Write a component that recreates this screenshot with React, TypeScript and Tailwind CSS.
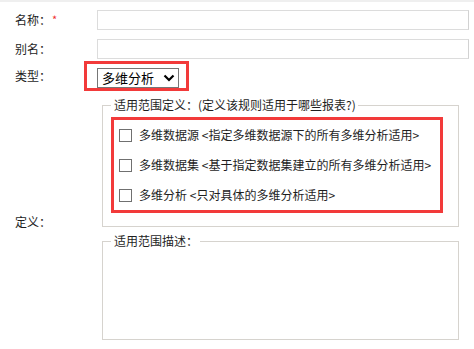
import React from "react";

const Checkbox = () => (
  <span className="block w-[13px] h-[13px] border border-[#707070] bg-white shrink-0" />
);

const Row = ({ name, desc }: { name: string; desc: string }) => (
  <div className="flex items-center h-[30px] pl-[5px]">
    <Checkbox />
    <span className="ml-[7px] whitespace-nowrap">
      {name} &lt;{desc}&gt;
    </span>
  </div>
);

export default function App() {
  return (
    <div className="w-[474px] h-[349px] bg-white text-[12px] leading-[20px] text-[#1e1e1e] font-['Noto_Sans_CJK_SC','Microsoft_YaHei',sans-serif] overflow-hidden">
      <div className="h-[2px] bg-[#efefef]" />
      <div className="flex flex-col pt-[8px]">
        <div className="flex items-center h-[20px]">
          <div className="w-[97px] pl-[15px] flex items-start whitespace-nowrap">
            <span>名称：</span>
            <span className="text-[#f03030] text-[11px] leading-[11px] mt-[4px] ml-[1px]">*</span>
          </div>
          <div className="w-[372px] h-[20px] border border-[#dcdcdc] border-r-[#d2d2d2] bg-white" />
        </div>
        <div className="flex items-center h-[20px] mt-[9px]">
          <div className="w-[97px] pl-[15px] whitespace-nowrap">别名：</div>
          <div className="w-[372px] h-[20px] border border-[#dcdcdc] border-r-[#d2d2d2] bg-white" />
        </div>
        <div className="flex items-center h-[30px] mt-[2px]">
          <div className="w-[84px] pl-[15px] whitespace-nowrap">类型：</div>
          <div className="w-[105px] h-[30px] border-[3px] border-[#f23a3a] pl-[10px] pt-[4px]">
            <div className="w-[82px] h-[20px] border border-[#767676] bg-white flex items-center justify-between pl-[4px] pr-[3px] text-[13px] text-black">
              <span className="whitespace-nowrap">多维分析</span>
              <svg width="12" height="8" viewBox="0 0 12 8" className="mt-[-1px]">
                <path d="M1.5 1.5 L6 6 L10.5 1.5" fill="none" stroke="#000" strokeWidth="2.2" />
              </svg>
            </div>
          </div>
        </div>
        <div className="flex items-center mt-[6px]">
          <div className="w-[102px] pl-[15px] whitespace-nowrap pt-[6px]">定义：</div>
          <div className="flex flex-col">
            <fieldset className="w-[357px] border border-[#d6d3ce] pl-[8px] pr-[14px] pb-[13px]">
              <legend className="pl-[3px] pr-[2px] leading-[16px] whitespace-nowrap">
                适用范围定义：(定义该规则适用于哪些报表?)
              </legend>
              <div className="mt-[4px] w-[332px] border-[3px] border-[#f23a3a] flex flex-col">
                <Row name="多维数据源" desc="指定多维数据源下的所有多维分析适用" />
                <Row name="多维数据集" desc="基于指定数据集建立的所有多维分析适用" />
                <Row name="多维分析" desc="只对具体的多维分析适用" />
              </div>
            </fieldset>
            <fieldset className="w-[357px] h-[107px] mt-[6px] border border-[#d6d3ce] pl-[8px]">
              <legend className="pl-[3px] pr-[2px] leading-[16px] whitespace-nowrap">适用范围描述：</legend>
            </fieldset>
          </div>
        </div>
      </div>
    </div>
  );
}
